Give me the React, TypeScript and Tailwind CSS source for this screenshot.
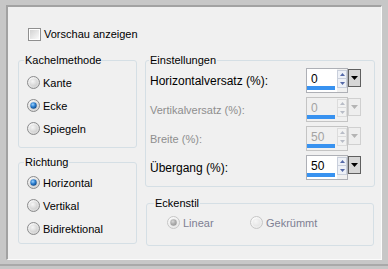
import React from 'react';

const font = "font-['Liberation_Sans',Arial,sans-serif]";

function Radio({ checked, disabled }: { checked?: boolean; disabled?: boolean }) {
  const ring = disabled ? '#c6c6c6' : '#8a8b8c';
  const id = disabled ? 'rd' : 'rn';
  return (
    <svg width="13" height="13" viewBox="0 0 13 13" className="shrink-0">
      <defs>
        <radialGradient id={`${id}-bg`} cx="35%" cy="30%" r="75%">
          <stop offset="0%" stopColor="#ffffff" />
          <stop offset="100%" stopColor={disabled ? '#e8e8e8' : '#d4d4d4'} />
        </radialGradient>
        <radialGradient id={`${id}-in`} cx="40%" cy="35%" r="70%">
          <stop offset="0%" stopColor="#f6f6f6" />
          <stop offset="100%" stopColor={disabled ? '#e4e4e4' : '#cfcfcf'} />
        </radialGradient>
        <radialGradient id={`${id}-dot`} cx="40%" cy="35%" r="65%">
          <stop offset="0%" stopColor={disabled ? '#d8d8d8' : '#9fd4ff'} />
          <stop offset="55%" stopColor={disabled ? '#b0b0b0' : '#2c7fd0'} />
          <stop offset="100%" stopColor={disabled ? '#9a9a9a' : '#114d8f'} />
        </radialGradient>
      </defs>
      <circle cx="6.5" cy="6.5" r="6" fill={`url(#${id}-bg)`} stroke={ring} strokeWidth="1" />
      <circle cx="6.5" cy="6.5" r="4" fill={`url(#${id}-in)`} />
      {checked && <circle cx="6.5" cy="6.5" r="3.2" fill={`url(#${id}-dot)`} />}
    </svg>
  );
}

function RadioRow({ label, checked, disabled }: { label: string; checked?: boolean; disabled?: boolean }) {
  return (
    <div className="flex items-center h-[23px] gap-[3px]">
      <Radio checked={checked} disabled={disabled} />
      <span className={`text-[11px] leading-[14px] ${disabled ? 'text-[#7e7f93]' : 'text-black'}`}>{label}</span>
    </div>
  );
}

function Spin({ value, disabled }: { value: string; disabled?: boolean }) {
  const arrow = disabled ? '#b8bcc6' : '#5569a8';
  return (
    <div className="flex items-start h-[25px]">
      <div className={`flex h-[25px] border ${disabled ? 'border-[#c4c4c4]' : 'border-[#aeb0b6]'}`}>
        <div className={`flex flex-col w-[30px] ${disabled ? 'bg-[#f0f0f0]' : 'bg-white'}`}>
          <span className={`pl-[4px] pt-[4px] text-[12px] leading-[13px] ${disabled ? 'text-[#a3a3a3]' : 'text-black'}`}>{value}</span>
          <div className="mt-auto mb-[2px] mr-[2px] h-[4px] bg-[#3892f0]" />
        </div>
        <div className="flex flex-col w-[10px] pt-[1px]">
          <div className={`h-[9px] border ${disabled ? 'border-[#dcdcdc] bg-[#f2f2f2]' : 'border-[#c9cfdb] bg-[#eef1f7]'} flex items-center justify-center`}>
            <svg width="5" height="3" viewBox="0 0 5 3"><path d="M0 3 L2.5 0 L5 3 Z" fill={arrow} /></svg>
          </div>
          <div className={`h-[9px] border border-t-0 ${disabled ? 'border-[#dcdcdc] bg-[#f2f2f2]' : 'border-[#c9cfdb] bg-[#eef1f7]'} flex items-center justify-center`}>
            <svg width="5" height="3" viewBox="0 0 5 3"><path d="M0 0 L2.5 3 L5 0 Z" fill={arrow} /></svg>
          </div>
        </div>
      </div>
      <div className={`mt-[1px] w-[13px] h-[18px] border flex items-center justify-center ${disabled ? 'border-[#d0d0d0] bg-[#eeeeee]' : 'border-[#5f5f5f] bg-[#d6d6d6]'}`}>
        <svg width="7" height="4" viewBox="0 0 7 4"><path d="M0 0 L7 0 L3.5 4 Z" fill={disabled ? '#b4b4b4' : '#000000'} /></svg>
      </div>
    </div>
  );
}

function SpinRow({ label, value, disabled }: { label: string; value: string; disabled?: boolean }) {
  return (
    <div className="flex items-center justify-between h-[25px]">
      <span className={disabled ? 'text-[11px] leading-[14px] text-[#8e8e8e]' : 'text-[12px] leading-[14px] text-black'}>{label}</span>
      <Spin value={value} disabled={disabled} />
    </div>
  );
}

export default function App() {
  return (
    <div className={`w-[388px] h-[269px] bg-[#c7c7c7] pt-[5px] pl-[6px] ${font}`}>
      <div className="w-[376px] h-[255px] bg-[#f0f0f0] border-t-2 border-l-2 border-[#a2a2a2] border-r border-b border-r-[#fbfbfb] border-b-[#fbfbfb]">
        {/* Preview checkbox */}
        <div className="flex items-center gap-[3px] h-[14px] mt-[20px] ml-[20px]">
          <div className="w-[13px] h-[13px] border border-[#8f8f8f] p-[1px] bg-white">
            <div className="w-full h-full bg-gradient-to-br from-[#d2d2d2] to-[#fbfbfb]" />
          </div>
          <span className="text-[11px] leading-[14px] text-black">Vorschau anzeigen</span>
        </div>

        <div className="flex gap-[8px] ml-[10px] mt-[12px]">
          {/* Left column */}
          <div className="flex flex-col w-[119px] gap-[7px]">
            <fieldset className="h-[95px] border border-[#d5dfe5] rounded-[3px] px-[5px] min-w-0">
              <legend className="px-[1px] text-[11px] leading-[14px] text-black">Kachelmethode</legend>
              <div className="pt-[4px] pl-[3px]">
                <RadioRow label="Kante" />
                <RadioRow label="Ecke" checked />
                <RadioRow label="Spiegeln" />
              </div>
            </fieldset>
            <fieldset className="h-[89px] border border-[#d5dfe5] rounded-[3px] px-[5px] min-w-0">
              <legend className="px-[1px] text-[11px] leading-[14px] text-black">Richtung</legend>
              <div className="pt-[2px] pl-[3px]">
                <RadioRow label="Horizontal" checked />
                <RadioRow label="Vertikal" />
                <RadioRow label="Bidirektional" />
              </div>
            </fieldset>
          </div>

          {/* Right column */}
          <div className="flex flex-col w-[230px] gap-[9px]">
            <fieldset className="h-[134px] border border-[#d5dfe5] rounded-[3px] px-[3px] min-w-0">
              <legend className="px-[1px] text-[11px] leading-[14px] text-black">Einstellungen</legend>
              <div className="flex flex-col gap-[4px] pl-[1px] pr-[10px] pt-[1px]">
                <SpinRow label="Horizontalversatz (%):" value="0" />
                <SpinRow label="Vertikalversatz (%):" value="0" disabled />
                <SpinRow label="Breite (%):" value="50" disabled />
                <SpinRow label="Übergang (%):" value="50" />
              </div>
            </fieldset>
            <fieldset className="h-[50px] mx-[1px] border border-[#d5dfe5] rounded-[3px] px-[7px] min-w-0">
              <legend className="px-[1px] text-[11px] leading-[14px] text-black">Eckenstil</legend>
              <div className="flex pt-[1px] pl-[13px]">
                <div className="w-[83px]">
                  <RadioRow label="Linear" checked disabled />
                </div>
                <RadioRow label="Gekrümmt" disabled />
              </div>
            </fieldset>
          </div>
        </div>
      </div>
      <div className="mt-[4px] -ml-[6px] w-[388px] h-[2px] bg-[#a9a9a9]" />
    </div>
  );
}
